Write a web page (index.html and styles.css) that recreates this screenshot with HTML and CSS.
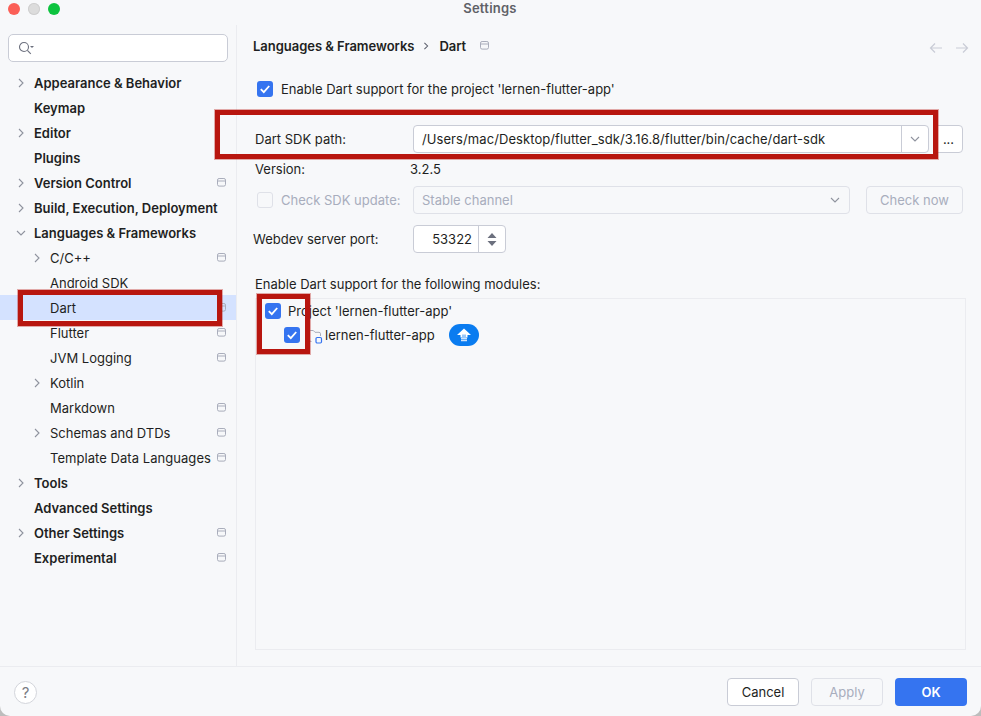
FILE: index.html
```html
<!DOCTYPE html>
<html lang="en">
<head>
<meta charset="utf-8">
<title>Settings</title>
<link rel="stylesheet" href="styles.css">
</head>
<body>
<svg class="sprites" width="0" height="0" aria-hidden="true">
  <symbol id="chev" viewBox="0 0 10 10"><path d="M3 1l4 4-4 4" fill="none" stroke="#8f939e" stroke-width="1.1"/></symbol>
  <symbol id="chevd" viewBox="0 0 10 10"><path d="M1 3l4 4 4-4" fill="none" stroke="#8f939e" stroke-width="1.1"/></symbol>
  <symbol id="proj" viewBox="0 0 10 9"><rect x=".5" y=".5" width="8" height="7.6" rx="1.6" fill="none" stroke="#a9adbb"/><path d="M.5 3h8" stroke="#a9adbb"/></symbol>
  <symbol id="check" viewBox="0 0 16 16"><path d="M3.800 8.200l3 3 5.400-6.200" fill="none" stroke="#fff" stroke-width="1.800"/></symbol>
</svg>
<div class="window">
  <header class="titlebar">
    <div class="lights"><i class="light red"></i><i class="light gray"></i><i class="light green"></i></div>
    <div class="title">Settings</div>
  </header>
  <div class="main">
    <aside class="sidebar">
      <div class="search">
        <svg class="search-icon" width="18" height="14" viewBox="0 0 18 14"><circle cx="6" cy="6" r="4.500" fill="none" stroke="#6c707e" stroke-width="1.100"/><path d="M9.400 9.400l3.400 3.400" stroke="#6c707e" stroke-width="1.100"/><path d="M12 5h4l-2 2z" fill="#6c707e"/></svg>
      </div>
      <nav class="tree">
        <div class="row top"><svg class="arrow"><use href="#chev"/></svg>Appearance &amp; Behavior</div>
        <div class="row top"><span class="noarrow"></span>Keymap</div>
        <div class="row top"><svg class="arrow"><use href="#chev"/></svg>Editor</div>
        <div class="row top"><span class="noarrow"></span>Plugins</div>
        <div class="row top"><svg class="arrow"><use href="#chev"/></svg>Version Control<svg class="pin"><use href="#proj"/></svg></div>
        <div class="row top"><svg class="arrow"><use href="#chev"/></svg>Build, Execution, Deployment</div>
        <div class="row top"><svg class="arrow"><use href="#chevd"/></svg>Languages &amp; Frameworks</div>
        <div class="row sub"><svg class="arrow"><use href="#chev"/></svg>C/C++<svg class="pin"><use href="#proj"/></svg></div>
        <div class="row sub"><span class="noarrow"></span>Android SDK</div>
        <div class="row sub selected"><span class="noarrow"></span>Dart<svg class="pin"><use href="#proj"/></svg></div>
        <div class="row sub"><span class="noarrow"></span>Flutter<svg class="pin"><use href="#proj"/></svg></div>
        <div class="row sub"><span class="noarrow"></span>JVM Logging<svg class="pin"><use href="#proj"/></svg></div>
        <div class="row sub"><svg class="arrow"><use href="#chev"/></svg>Kotlin</div>
        <div class="row sub"><span class="noarrow"></span>Markdown<svg class="pin"><use href="#proj"/></svg></div>
        <div class="row sub"><svg class="arrow"><use href="#chev"/></svg>Schemas and DTDs<svg class="pin"><use href="#proj"/></svg></div>
        <div class="row sub"><span class="noarrow"></span><span class="wide">Template Data Languages</span><svg class="pin"><use href="#proj"/></svg></div>
        <div class="row top"><svg class="arrow"><use href="#chev"/></svg>Tools</div>
        <div class="row top"><span class="noarrow"></span>Advanced Settings</div>
        <div class="row top"><svg class="arrow"><use href="#chev"/></svg>Other Settings<svg class="pin"><use href="#proj"/></svg></div>
        <div class="row top"><span class="noarrow"></span>Experimental<svg class="pin"><use href="#proj"/></svg></div>
      </nav>
    </aside>
    <section class="content">
      <div class="crumbs">
        <span class="crumb">Languages &amp; Frameworks</span>
        <svg class="crumb-sep" width="8" height="8" viewBox="0 0 10 10"><path d="M3 1l4 4-4 4" fill="none" stroke="#5a5d6b" stroke-width="1.300"/></svg>
        <span class="crumb">Dart</span>
        <svg class="crumb-icon"><use href="#proj"/></svg>
        <span class="nav-arrows">
          <svg width="14" height="12" viewBox="0 0 14 12"><path d="M13 6H1.500M6 1.500L1.500 6 6 10.500" fill="none" stroke="#c9ccd6" stroke-width="1.200"/></svg>
          <svg width="14" height="12" viewBox="0 0 14 12"><path d="M1 6h11.500M8 1.500L12.500 6 8 10.500" fill="none" stroke="#c9ccd6" stroke-width="1.200"/></svg>
        </span>
      </div>
      <div class="enable-row">
        <span class="cb on"><svg><use href="#check"/></svg></span>
        <span>Enable Dart support for the project 'lernen-flutter-app'</span>
      </div>
      <div class="sdk-row">
        <label class="lbl">Dart SDK path:</label>
        <div class="combo"><span class="combo-text">/Users/mac/Desktop/flutter_sdk/3.16.8/flutter/bin/cache/dart-sdk</span><span class="combo-btn"><svg width="10" height="10"><use href="#chevd"/></svg></span></div>
        <span class="more">...</span>
      </div>
      <div class="version-row"><span class="lbl">Version:</span><span>3.2.5</span></div>
      <div class="update-row">
        <span class="cb off"></span>
        <span class="update-label">Check SDK update:</span>
        <div class="select"><span>Stable channel</span><svg width="10" height="10"><use href="#chevd"/></svg></div>
        <span class="check-now">Check now</span>
      </div>
      <div class="port-row">
        <span class="port-label">Webdev server port:</span>
        <div class="spinner"><span class="port">53322</span><span class="spin"><svg width="12" height="15" viewBox="0 0 12 15"><path d="M6 1l4.500 5h-9zM6 14l4.500-5h-9z" fill="#6c707e"/></svg></span></div>
      </div>
      <div class="modules-label">Enable Dart support for the following modules:</div>
      <div class="modules">
        <div class="mod-row"><span class="cb on"><svg><use href="#check"/></svg></span><span>Project 'lernen-flutter-app'</span></div>
        <div class="mod-row child">
          <span class="cb on"><svg><use href="#check"/></svg></span>
          <svg class="folder" width="16" height="15" viewBox="0 0 16 15"><path d="M3.500 12.500H3a1.500 1.500 0 0 1-1.500-1.500V2.500a1 1 0 0 1 1-1h2.800l1.700 1.800h4a1.500 1.500 0 0 1 1.500 1.500V7" fill="none" stroke="#a9adbb"/><rect x="8" y="8.500" width="5.500" height="5.500" rx="1.200" fill="none" stroke="#3574f0" stroke-width="1.200"/></svg>
          <span>lernen-flutter-app</span>
          <span class="badge"><svg width="18" height="16" viewBox="0 0 18 16"><path d="M9 1.500L2 8h3.500v2.500h7V8H16z" fill="#fff"/><path d="M6 11.500h6M6 13.500h6" stroke="#cfe3fb" stroke-width="1.300"/><path d="M7 7.500h4v3H7z" fill="#9cc8f8"/></svg></span>
        </div>
      </div>
    </section>
  </div>
  <footer class="footer">
    <span class="help">?</span>
    <div class="buttons">
      <span class="btn cancel">Cancel</span>
      <span class="btn apply">Apply</span>
      <span class="btn ok">OK</span>
    </div>
  </footer>
  <div class="mark mark-sdk"></div>
  <div class="mark mark-dart"></div>
  <div class="mark mark-checks"></div>
</div>
</body>
</html>
```
FILE: styles.css
```css
* { box-sizing: border-box; }
html, body { margin: 0; padding: 0; width: 981px; height: 716px; overflow: hidden; background: #bdbdbd; }
body { font-family: Inter, "Liberation Sans", sans-serif; font-size: 13px; color: #1e1f22; }
.sprites { position: absolute; }
.window { position: relative; width: 981px; height: 716px; background: #f7f8fa; border-radius: 0 0 10px 10px; overflow: hidden; display: flex; flex-direction: column; }
.titlebar { height: 25px; flex: none; position: relative; display: flex; align-items: center; justify-content: center; }
.title { font-size: 13px; font-weight: 600; color: #5f6167; margin-top: -9px; margin-left: -1px; letter-spacing: .25px; }
.lights { position: absolute; left: 8px; top: 3px; display: flex; gap: 8px; }
.light { width: 12px; height: 12px; border-radius: 50%; display: block; }
.red { background: #fb5f57; }
.gray { background: #dcdcdc; box-shadow: inset 0 0 0 1px #cfcfcf; }
.green { background: #0dc33f; }
.main { flex: 1; display: flex; min-height: 0; }
.sidebar { width: 237px; flex: none; border-right: 1px solid #ebecf0; padding: 9px 0 0 0; }
.search { margin-left: 8px; width: 220px; height: 28px; background: #fff; border: 1px solid #c9ccd6; border-radius: 5px; display: flex; align-items: center; padding-left: 9px; }
.tree { margin-top: 8px; }
.row { height: 25px; display: flex; align-items: center; position: relative; white-space: nowrap; color: #1e1f22; }
.row.top { font-weight: 600; padding-left: 16px; }
.row.sub { padding-left: 32px; }
.wide { letter-spacing: .05px; }
.arrow { width: 10px; height: 10px; flex: none; margin-right: 8px; }
.noarrow { width: 10px; flex: none; margin-right: 8px; }
.pin { position: absolute; left: 217px; top: 8px; width: 10px; height: 9px; }
.selected { background: #d4e2ff; }
.content { flex: 1; padding: 0 18px 0 16px; min-width: 0; }
.crumbs { height: 43px; display: flex; align-items: center; font-weight: 600; padding-bottom: 2px; position: relative; letter-spacing: -.03px; }
.crumb-sep { margin: 0 9px 0 8px; }
.crumb-icon { width: 10px; height: 9px; margin-left: 14px; }
.nav-arrows { margin-left: auto; display: flex; gap: 12px; margin-right: -6px; margin-top: 5px; }
.enable-row { margin-top: 11px; height: 20px; display: flex; align-items: center; gap: 8px; padding-left: 4px; }
.cb { width: 16px; height: 16px; border-radius: 3px; flex: none; display: block; }
.cb svg { width: 16px; height: 16px; display: block; }
.cb.on { background: #3574f0; }
.cb.off { background: #f7f8fa; border: 1px solid #dfe1e8; }
.sdk-row { margin-top: 26px; height: 28px; display: flex; align-items: center; padding-left: 2px; }
.lbl { width: 158px; flex: none; }
.combo { width: 516px; height: 28px; background: #fff; border: 1px solid #c9ccd6; border-radius: 4px; display: flex; align-items: center; flex: none; }
.combo-text { flex: 1; padding-left: 8px; white-space: nowrap; letter-spacing: .08px; }
.combo-btn { width: 27px; height: 26px; border-left: 1px solid #c9ccd6; display: flex; align-items: center; justify-content: center; flex: none; }
.more { width: 29px; height: 28px; margin-left: 5px; background: #fff; border: 1px solid #c9ccd6; border-radius: 4px; display: flex; align-items: center; justify-content: center; flex: none; padding-bottom: 1px; }
.version-row { margin-top: 5px; height: 21px; display: flex; align-items: center; padding-left: 2px; }
.version-row .lbl { width: 155px; }
.update-row { margin-top: 7px; height: 28px; display: flex; align-items: center; padding-left: 4px; color: #a8adbd; }
.update-label { margin-left: 8px; width: 132px; flex: none; white-space: nowrap; }
.select { width: 437px; height: 28px; border: 1px solid #dfe1e8; border-radius: 4px; display: flex; align-items: center; justify-content: space-between; padding: 0 9px 0 8px; flex: none; }
.check-now { width: 97px; height: 28px; margin-left: 16px; border: 1px solid #dfe1e8; border-radius: 4px; display: flex; align-items: center; justify-content: center; flex: none; }
.port-row { margin-top: 11px; height: 28px; display: flex; align-items: center; }
.port-label { width: 160px; flex: none; }
.spinner { width: 93px; height: 28px; background: #fff; border: 1px solid #c9ccd6; border-radius: 4px; display: flex; align-items: center; }
.port { flex: 1; text-align: right; padding-right: 6px; }
.spin { width: 27px; height: 26px; border-left: 1px solid #c9ccd6; display: flex; align-items: center; justify-content: center; flex: none; }
.modules-label { margin-top: 23px; padding-left: 2px; height: 16px; line-height: 16px; }
.modules { margin-top: 6px; margin-left: 2px; width: 711px; height: 352px; border: 1px solid #ebecf0; }
.mod-row { height: 24px; display: flex; align-items: center; gap: 7px; padding-left: 9px; }
.mod-row.child { padding-left: 28px; gap: 0; }
.folder { margin-left: 8px; margin-right: 1px; flex: none; margin-top: 2px; }
.badge { margin-left: 14px; width: 30px; height: 22px; border-radius: 11px; background: #0a7cf0; display: flex; align-items: center; justify-content: center; }
.footer { height: 50px; flex: none; border-top: 1px solid #ebecf0; display: flex; align-items: center; padding: 0 14px; position: relative; }
.help { width: 23px; height: 23px; border-radius: 50%; background: #fff; border: 1px solid #d3d5db; display: flex; align-items: center; justify-content: center; color: #7b7d85; font-size: 15px; margin-top: 2px; }
.buttons { margin-left: auto; display: flex; gap: 12px; margin-top: 1px; }
.btn { width: 72px; height: 28px; border-radius: 4px; display: flex; align-items: center; justify-content: center; }
.cancel { background: #fff; border: 1px solid #c9ccd6; }
.apply { border: 1px solid #dfe1e8; color: #a8adbd; }
.ok { background: #3574f0; color: #fff; font-weight: 600; }
.mark { position: absolute; border: 5px solid #b8160f; box-shadow: 0 0 0 1px rgba(184,22,15,.35); pointer-events: none; }
.mark-sdk { left: 215px; top: 110px; width: 723px; height: 49px; }
.mark-dart { left: 18px; top: 290px; width: 204px; height: 36px; }
.mark-checks { left: 257px; top: 294px; width: 53px; height: 60px; }
```
